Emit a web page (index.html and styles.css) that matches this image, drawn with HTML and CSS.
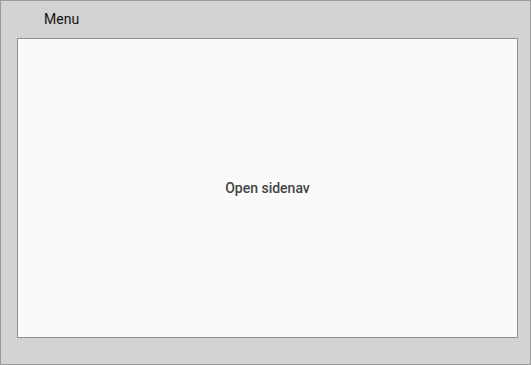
FILE: index.html
```html
<!DOCTYPE html>
<html>
<head>
<meta charset="utf-8">
<link rel="stylesheet" href="styles.css">
</head>
<body>
<div class="app">
  <div class="toolbar"><span class="title">Menu</span></div>
  <div class="container">
    <button class="open-btn" type="button">Open sidenav</button>
  </div>
</div>
</body>
</html>
```
FILE: styles.css
```css
html, body {
  margin: 0;
  padding: 0;
}
body {
  font-family: Roboto, "Noto Sans", Arial, sans-serif;
  background: #d3d3d3;
}
.app {
  box-sizing: border-box;
  width: 531px;
  height: 365px;
  border: 1px solid #9a9a9a;
  background: #d3d3d3;
  display: flex;
  flex-direction: column;
}
.toolbar {
  height: 37px;
  box-sizing: border-box;
  padding: 10px 0 0 43px;
  font-size: 14px;
  line-height: 16px;
  color: #111;
}
.container {
  box-sizing: border-box;
  margin-left: 16px;
  width: 501px;
  height: 300px;
  border: 1px solid #8f8f8f;
  background: #fafafa;
  display: flex;
  align-items: center;
  justify-content: center;
}
.open-btn {
  font-family: Roboto, "Noto Sans", Arial, sans-serif;
  font-size: 14px;
  font-weight: 500;
  color: #444;
  background: transparent;
  border: none;
  padding: 0 16px;
  line-height: 36px;
  margin: 0;
}
```
